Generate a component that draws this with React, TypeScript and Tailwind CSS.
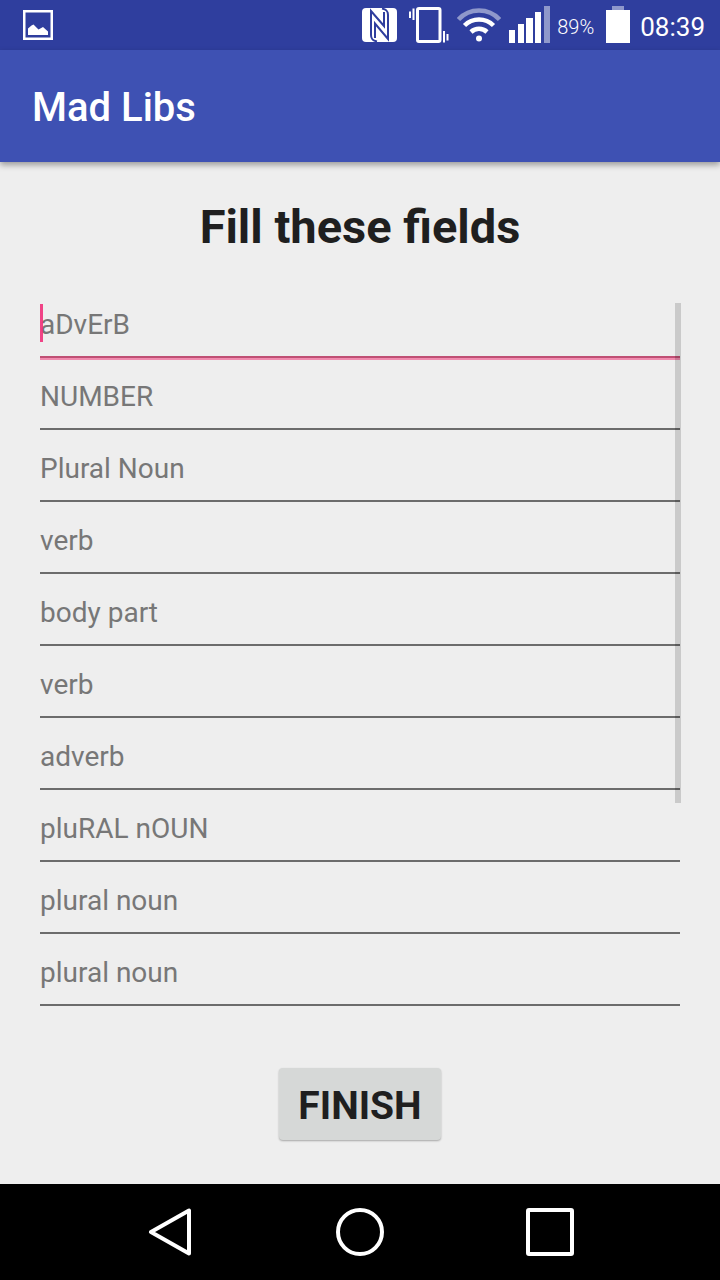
import React from "react";

const fields: string[] = [
  "aDvErB",
  "NUMBER",
  "Plural Noun",
  "verb",
  "body part",
  "verb",
  "adverb",
  "pluRAL nOUN",
  "plural noun",
  "plural noun",
];

function PictureIcon() {
  return (
    <svg width="30" height="30" viewBox="0 0 30 30" aria-hidden="true">
      <rect x="1.25" y="1.25" width="27.5" height="27.5" fill="none" stroke="#fff" strokeWidth="2.5" />
      <path d="M5 25V18.500L8.500 15.500L10.500 14.500L15.500 19.500L20 17L25 21.500V25Z" fill="#fff" />
    </svg>
  );
}

function NfcIcon() {
  return (
    <svg width="35" height="34" viewBox="0 0 35 34" aria-hidden="true">
      <rect width="35" height="34" rx="4" fill="#fff" />
      <g fill="none" stroke="#2f3e9e" strokeWidth="2">
        <path d="M15 33.500C10.500 32.500 9 31 9 27V3L22 18V4" />
        <path d="M20 .5C24.500 1.500 26 3 26 7V31L13 15.500V30" />
      </g>
    </svg>
  );
}

function VibrateIcon() {
  return (
    <svg width="40" height="38" viewBox="0 0 40 38" aria-hidden="true">
      <rect x="8.500" y="2.500" width="22.500" height="33" rx="1.500" fill="none" stroke="#fff" strokeWidth="3" />
      <path d="M1 5.500V12M4.500 2.500V14M35 25V36.500M38.500 28V34.500" stroke="#fff" strokeWidth="2" />
    </svg>
  );
}

function WifiIcon() {
  return (
    <svg width="44" height="36" viewBox="0 0 44 36" fill="none" strokeWidth="4.500" aria-hidden="true">
      <path d="M1.500 12.500C12.500 .5 31.500 .5 42.500 12.500" stroke="#8f98cb" />
      <path d="M7.500 18.500C15.500 10.500 28.500 10.500 36.500 18.500" stroke="#fff" />
      <path d="M14 25C18.500 20.800 25.500 20.800 30 25" stroke="#fff" />
      <circle cx="22" cy="31.500" r="3" fill="#fff" />
    </svg>
  );
}

function SignalIcon() {
  return (
    <svg width="41" height="38" viewBox="0 0 41 38" fill="#fff" aria-hidden="true">
      <rect x="0" y="24" width="6" height="13" />
      <rect x="9" y="18" width="6" height="19" />
      <rect x="17" y="12" width="7" height="25" />
      <rect x="26" y="6" width="6" height="31" />
      <rect x="35" y="0" width="6" height="37" fill="#8f98cb" />
    </svg>
  );
}

function BatteryIcon() {
  return (
    <svg width="24" height="38" viewBox="0 0 24 38" aria-hidden="true">
      <rect x="6" y="0" width="12" height="4" fill="#8f98cb" />
      <rect x="0" y="4" width="24" height="33" fill="#fff" />
    </svg>
  );
}

function StatusBar() {
  return (
    <div className="flex h-[50px] items-center justify-between bg-[#2f3e9e] pr-[15px] pl-[23px] text-white">
      <PictureIcon />
      <div className="flex items-center">
        <div className="flex items-center gap-2">
          <span className="mr-1">
            <NfcIcon />
          </span>
          <VibrateIcon />
          <WifiIcon />
          <SignalIcon />
        </div>
        <span className="ml-[7px] w-[40px] pt-1 text-[20px] leading-none font-light">89%</span>
        <span className="ml-[9px]">
          <BatteryIcon />
        </span>
        <span className="ml-[10px] pt-1 text-[26px] leading-none">08:39</span>
      </div>
    </div>
  );
}

function Field({ label, focused }: { label: string; focused: boolean }) {
  return (
    <li className="relative">
      <input
        type="text"
        aria-label={label}
        placeholder={label}
        className={
          "block h-[72px] w-full border-b-2 bg-transparent pt-[6px] text-[28px] text-[#212121] outline-none placeholder:text-[#777777] placeholder:opacity-100 " +
          (focused ? "border-[#bf4f74]" : "border-[#6c6c6c]")
        }
      />
      {focused && (
        <>
          <span className="absolute top-full left-0 h-[2px] w-full bg-[#f08bae]" />
          <span className="absolute top-[18px] left-0 h-[38px] w-[3px] bg-[#f0307a]/90" />
        </>
      )}
    </li>
  );
}

export default function App() {
  return (
    <div
      className="flex min-h-screen flex-col bg-[#eeeeee]"
      style={{ fontFamily: 'Roboto, "Liberation Sans", sans-serif' }}
    >
      <StatusBar />
      <header className="flex h-28 items-center bg-[#3e51b3] px-8 pt-1 shadow-[0_3px_6px_rgba(0,0,0,0.35)]">
        <h1 className="text-[40px] leading-none font-medium text-white">Mad Libs</h1>
      </header>

      <main className="flex flex-1 flex-col px-10 pt-[37px]">
        <h2 className="text-center text-[47px] leading-[56px] font-bold text-[#1f1f1f]">Fill these fields</h2>
        <div className="relative mt-[31px]">
          <ul>
            {fields.map((label, i) => (
              <Field key={i} label={label} focused={i === 0} />
            ))}
          </ul>
          <span className="absolute top-[17px] -right-px h-[500px] w-[6px] bg-black/15" />
        </div>
        <button
          type="button"
          className="mx-auto mt-[62px] mb-11 h-[72px] w-[162px] rounded-[4px] bg-[#d6d8d7] pt-1 text-[39px] leading-none font-bold text-[#1f1f1f] shadow-[0_1px_2px_rgba(0,0,0,0.3)]"
        >
          FINISH
        </button>
      </main>

      <nav className="grid h-24 grid-cols-3 bg-black px-[75px]">
        <button type="button" aria-label="Back" className="flex items-center justify-center">
          <svg width="44" height="48" viewBox="0 0 44 48" aria-hidden="true">
            <path d="M3 24L41 2.500V45.500Z" fill="none" stroke="#fff" strokeWidth="4" strokeLinejoin="round" />
          </svg>
        </button>
        <button type="button" aria-label="Home" className="flex items-center justify-center">
          <svg width="48" height="48" viewBox="0 0 48 48" aria-hidden="true">
            <circle cx="24" cy="24" r="22" fill="none" stroke="#fff" strokeWidth="4" />
          </svg>
        </button>
        <button type="button" aria-label="Recent apps" className="flex items-center justify-center">
          <svg width="48" height="48" viewBox="0 0 48 48" aria-hidden="true">
            <rect x="2" y="2" width="44" height="44" rx="1" fill="none" stroke="#fff" strokeWidth="4" />
          </svg>
        </button>
      </nav>
    </div>
  );
}
